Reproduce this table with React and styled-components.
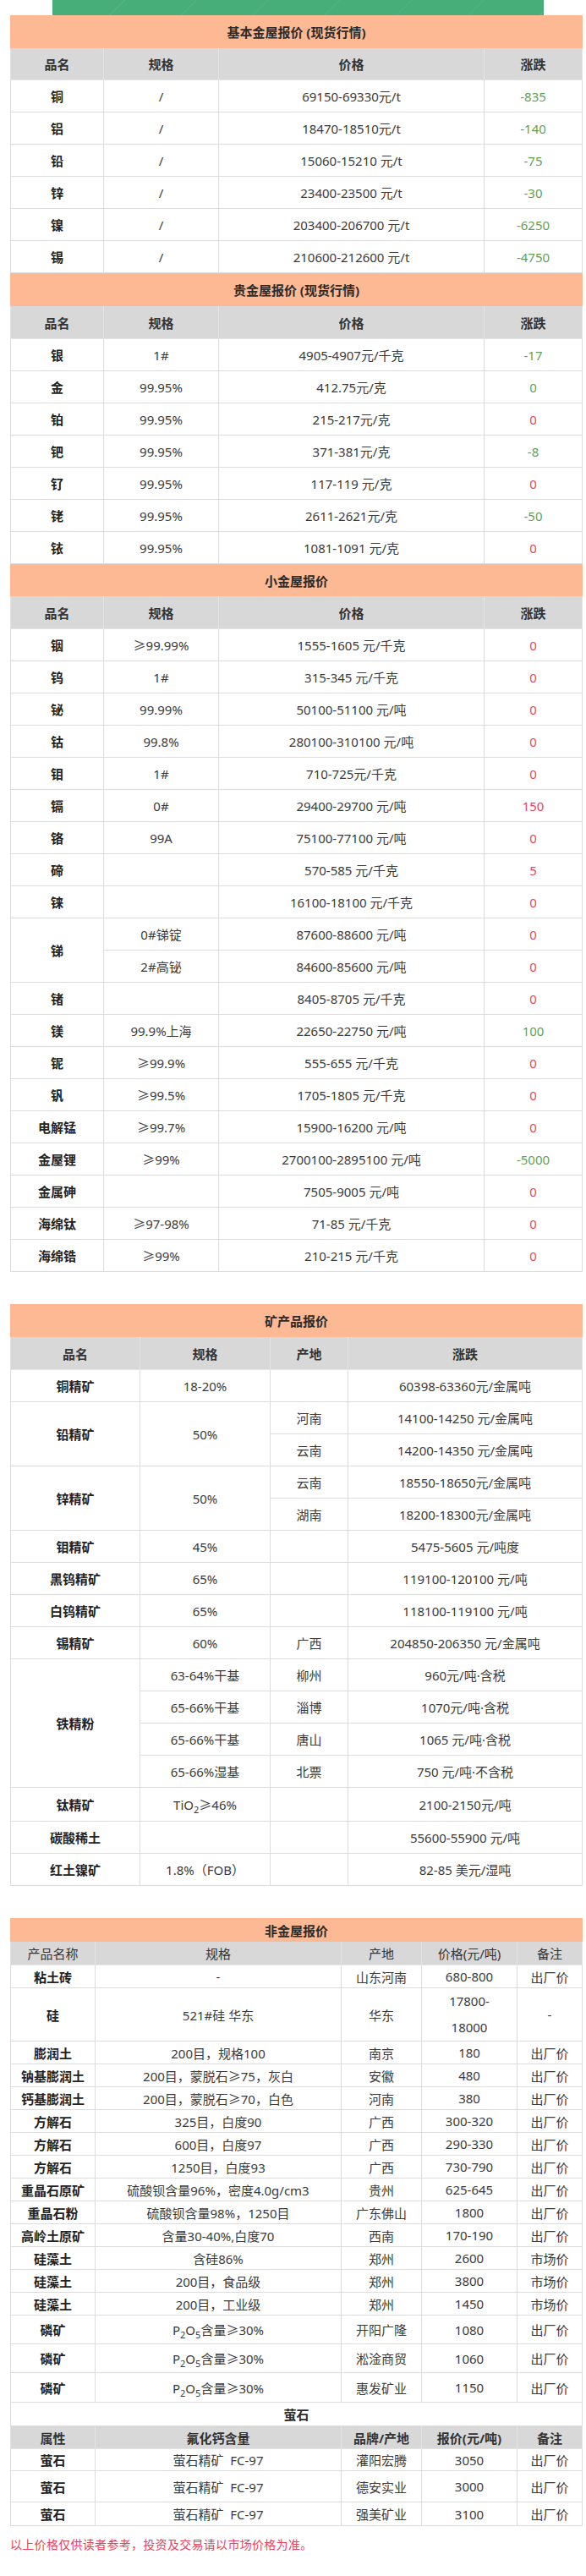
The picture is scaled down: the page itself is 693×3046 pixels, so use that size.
import React from "react";
import styled, { createGlobalStyle } from "styled-components";

const GlobalStyle = createGlobalStyle`
  body {
    margin: 0;
    background: #ffffff;
    font-family: "Noto Sans", "Noto Sans CJK SC", sans-serif;
    color: #333333;
  }
`;

const Page = styled.div`
  width: 693px;
  box-sizing: border-box;
  padding: 0 5px 0 12px;
`;

const Banner = styled.div`
  width: 581px;
  height: 18px;
  margin-left: 50px;
  background-color: #47ae7a;
  background-image: repeating-linear-gradient(
    135deg,
    rgba(255, 255, 255, 0.06) 0 1px,
    transparent 1px 60px
  );
`;

const Section = styled.section`
  margin-top: ${(p) => p.$gap || 0}px;
`;

const Table = styled.table`
  width: 100%;
  border-collapse: collapse;
  table-layout: fixed;
  font-size: 15px;
`;

const Col = styled.col`
  width: ${(p) => p.$w}px;
`;

const Row = styled.tr`
  height: ${(p) => p.$h || 38}px;
`;

const TitleCell = styled.td`
  background: ${(p) => (p.$plain ? "#ffffff" : "#fcb993")};
  border: 1px solid ${(p) => (p.$plain ? "#dddddd" : "#fcb993")};
  text-align: center;
  font-weight: 700;
  color: #2b2b2b;
  padding: 0;
`;

const HeadCell = styled.td`
  background: #d8d8d8;
  border: 1px solid #e4e4e4;
  text-align: center;
  font-weight: ${(p) => (p.$light ? 400 : 700)};
  color: #333333;
  padding: 0;
`;

const Cell = styled.td`
  border: 1px solid #dddddd;
  text-align: center;
  vertical-align: middle;
  padding: 0;
  line-height: ${(p) => p.$lh || "normal"};
  font-weight: ${(p) => (p.$bold ? 700 : 400)};
  color: ${(p) =>
    p.$tone === "down" ? "#5f9f55" : p.$tone === "up" ? "#e6455a" : p.$bold ? "#222222" : "#3a3a3a"};
`;

const Sub = styled.sub`
  font-size: 11px;
  vertical-align: -4px;
  line-height: 0;
`;

const Note = styled.p`
  margin: 9px 0 0;
  font-size: 14px;
  letter-spacing: 0.3px;
  line-height: 24px;
  color: #e8415a;
  font-family: "Noto Sans CJK SC", sans-serif;
`;

const BottomRule = styled.div`
  margin: 32px -5px 0 -12px;
  height: 0;
  border-top: 2px solid #8a8a8a;
`;

const basic = [
  ["铜", "/", "69150-69330元/t", "-835", "down"],
  ["铝", "/", "18470-18510元/t", "-140", "down"],
  ["铅", "/", "15060-15210 元/t", "-75", "down"],
  ["锌", "/", "23400-23500 元/t", "-30", "down"],
  ["镍", "/", "203400-206700 元/t", "-6250", "down"],
  ["锡", "/", "210600-212600 元/t", "-4750", "down"],
];

const precious = [
  ["银", "1#", "4905-4907元/千克", "-17", "down"],
  ["金", "99.95%", "412.75元/克", "0", "down"],
  ["铂", "99.95%", "215-217元/克", "0", "up"],
  ["钯", "99.95%", "371-381元/克", "-8", "down"],
  ["钌", "99.95%", "117-119 元/克", "0", "up"],
  ["铑", "99.95%", "2611-2621元/克", "-50", "down"],
  ["铱", "99.95%", "1081-1091 元/克", "0", "up"],
];

const small = [
  { name: "铟", rows: [["≥99.99%", "1555-1605 元/千克", "0", "up"]] },
  { name: "钨", rows: [["1#", "315-345 元/千克", "0", "up"]] },
  { name: "铋", rows: [["99.99%", "50100-51100 元/吨", "0", "up"]] },
  { name: "钴", rows: [["99.8%", "280100-310100 元/吨", "0", "up"]] },
  { name: "钼", rows: [["1#", "710-725元/千克", "0", "up"]] },
  { name: "镉", rows: [["0#", "29400-29700 元/吨", "150", "up"]] },
  { name: "铬", rows: [["99A", "75100-77100 元/吨", "0", "up"]] },
  { name: "碲", rows: [["", "570-585 元/千克", "5", "up"]] },
  { name: "铼", rows: [["", "16100-18100 元/千克", "0", "up"]] },
  {
    name: "锑",
    rows: [
      ["0#锑锭", "87600-88600 元/吨", "0", "up"],
      ["2#高铋", "84600-85600 元/吨", "0", "up"],
    ],
  },
  { name: "锗", rows: [["", "8405-8705 元/千克", "0", "up"]] },
  { name: "镁", rows: [["99.9%上海", "22650-22750 元/吨", "100", "down"]] },
  { name: "铌", rows: [["≥99.9%", "555-655 元/千克", "0", "up"]] },
  { name: "钒", rows: [["≥99.5%", "1705-1805 元/千克", "0", "up"]] },
  { name: "电解锰", rows: [["≥99.7%", "15900-16200 元/吨", "0", "up"]] },
  { name: "金屋锂", rows: [["≥99%", "2700100-2895100 元/吨", "-5000", "down"]] },
  { name: "金属砷", rows: [["", "7505-9005 元/吨", "0", "up"]] },
  { name: "海绵钛", rows: [["≥97-98%", "71-85 元/千克", "0", "up"]] },
  { name: "海绵锆", rows: [["≥99%", "210-215 元/千克", "0", "up"]] },
];

const titanium = (
  <>
    TiO<Sub>2</Sub>≥46%
  </>
);

const mining = [
  { name: "铜精矿", spec: "18-20%", rows: [["", "60398-63360元/金属吨"]] },
  {
    name: "铅精矿",
    spec: "50%",
    rows: [
      ["河南", "14100-14250 元/金属吨"],
      ["云南", "14200-14350 元/金属吨"],
    ],
  },
  {
    name: "锌精矿",
    spec: "50%",
    rows: [
      ["云南", "18550-18650元/金属吨"],
      ["湖南", "18200-18300元/金属吨"],
    ],
  },
  { name: "钼精矿", spec: "45%", rows: [["", "5475-5605 元/吨度"]] },
  { name: "黑钨精矿", spec: "65%", rows: [["", "119100-120100 元/吨"]] },
  { name: "白钨精矿", spec: "65%", rows: [["", "118100-119100 元/吨"]] },
  { name: "锡精矿", spec: "60%", rows: [["广西", "204850-206350 元/金属吨"]] },
  {
    name: "铁精粉",
    rows: [
      ["柳州", "960元/吨·含税", "63-64%干基"],
      ["淄博", "1070元/吨·含税", "65-66%干基"],
      ["唐山", "1065 元/吨·含税", "65-66%干基"],
      ["北票", "750 元/吨·不含税", "65-66%湿基"],
    ],
  },
  { name: "钛精矿", spec: titanium, h: 40, rows: [["", "2100-2150元/吨"]] },
  { name: "碳酸稀土", spec: "", rows: [["", "55600-55900 元/吨"]] },
  { name: "红土镍矿", spec: "1.8%（FOB）", rows: [["", "82-85 美元/湿吨"]] },
];

const p2o5 = (
  <>
    P<Sub>2</Sub>O<Sub>5</Sub>含量≥30%
  </>
);

const nonMetal = [
  ["粘土砖", "-", "山东河南", "680-800", "出厂价", 27],
  ["硅", "521#硅 华东", "华东", "17800-18000", "-", 62],
  ["膨润土", "200目，规格100", "南京", "180", "出厂价", 27],
  ["钠基膨润土", "200目，蒙脱石≥75，灰白", "安徽", "480", "出厂价", 27],
  ["钙基膨润土", "200目，蒙脱石≥70，白色", "河南", "380", "出厂价", 27],
  ["方解石", "325目，白度90", "广西", "300-320", "出厂价", 27],
  ["方解石", "600目，白度97", "广西", "290-330", "出厂价", 27],
  ["方解石", "1250目，白度93", "广西", "730-790", "出厂价", 27],
  ["重晶石原矿", "硫酸钡含量96%，密度4.0g/cm3", "贵州", "625-645", "出厂价", 27],
  ["重晶石粉", "硫酸钡含量98%，1250目", "广东佛山", "1800", "出厂价", 27],
  ["高岭土原矿", "含量30-40%,白度70", "西南", "170-190", "出厂价", 27],
  ["硅藻土", "含硅86%", "郑州", "2600", "市场价", 27],
  ["硅藻土", "200目，食品级", "郑州", "3800", "市场价", 27],
  ["硅藻土", "200目，工业级", "郑州", "1450", "市场价", 27],
  ["磷矿", p2o5, "开阳广隆", "1080", "出厂价", 34],
  ["磷矿", p2o5, "淞淦商贸", "1060", "出厂价", 34],
  ["磷矿", p2o5, "惠发矿业", "1150", "出厂价", 35],
];

const fluorite = [
  ["灌阳宏腾", "3050", 26],
  ["德安实业", "3000", 37],
  ["强美矿业", "3100", 28],
];

const MetalTable = ({ title, rows, titleH, headH }) => (
  <Table>
    <colgroup>
      <Col $w={110} />
      <Col $w={136} />
      <Col $w={314} />
      <Col $w={116} />
    </colgroup>
    <tbody>
      <Row $h={titleH}>
        <TitleCell colSpan={4}>{title}</TitleCell>
      </Row>
      <Row $h={headH}>
        <HeadCell>品名</HeadCell>
        <HeadCell>规格</HeadCell>
        <HeadCell>价格</HeadCell>
        <HeadCell>涨跌</HeadCell>
      </Row>
      {rows.map(([name, spec, price, change, tone]) => (
        <Row key={name}>
          <Cell $bold>{name}</Cell>
          <Cell>{spec}</Cell>
          <Cell>{price}</Cell>
          <Cell $tone={tone}>{change}</Cell>
        </Row>
      ))}
    </tbody>
  </Table>
);

const SmallMetalTable = () => (
  <Table>
    <colgroup>
      <Col $w={110} />
      <Col $w={136} />
      <Col $w={314} />
      <Col $w={116} />
    </colgroup>
    <tbody>
      <Row $h={37}>
        <TitleCell colSpan={4}>小金屋报价</TitleCell>
      </Row>
      <Row $h={39}>
        <HeadCell>品名</HeadCell>
        <HeadCell>规格</HeadCell>
        <HeadCell>价格</HeadCell>
        <HeadCell>涨跌</HeadCell>
      </Row>
      {small.map((group) =>
        group.rows.map(([spec, price, change, tone], i) => (
          <Row key={group.name + i}>
            {i === 0 && (
              <Cell $bold rowSpan={group.rows.length}>
                {group.name}
              </Cell>
            )}
            <Cell>{spec}</Cell>
            <Cell>{price}</Cell>
            <Cell $tone={tone}>{change}</Cell>
          </Row>
        ))
      )}
    </tbody>
  </Table>
);

const MiningTable = () => (
  <Table>
    <colgroup>
      <Col $w={153} />
      <Col $w={154} />
      <Col $w={92} />
      <Col $w={277} />
    </colgroup>
    <tbody>
      <Row $h={38}>
        <TitleCell colSpan={4}>矿产品报价</TitleCell>
      </Row>
      <Row $h={39}>
        <HeadCell>品名</HeadCell>
        <HeadCell>规格</HeadCell>
        <HeadCell>产地</HeadCell>
        <HeadCell>涨跌</HeadCell>
      </Row>
      {mining.map((group) =>
        group.rows.map(([place, price, ownSpec], i) => (
          <Row key={group.name + i} $h={group.h}>
            {i === 0 && (
              <Cell $bold rowSpan={group.rows.length}>
                {group.name}
              </Cell>
            )}
            {ownSpec !== undefined ? (
              <Cell>{ownSpec}</Cell>
            ) : (
              i === 0 && <Cell rowSpan={group.rows.length}>{group.spec}</Cell>
            )}
            <Cell>{place}</Cell>
            <Cell>{price}</Cell>
          </Row>
        ))
      )}
    </tbody>
  </Table>
);

const NonMetalTable = () => (
  <Table>
    <colgroup>
      <Col $w={100} />
      <Col $w={291} />
      <Col $w={95} />
      <Col $w={113} />
      <Col $w={77} />
    </colgroup>
    <tbody>
      <Row $h={27}>
        <TitleCell colSpan={5}>非金屋报价</TitleCell>
      </Row>
      <Row $h={28}>
        <HeadCell $light>产品名称</HeadCell>
        <HeadCell $light>规格</HeadCell>
        <HeadCell $light>产地</HeadCell>
        <HeadCell $light>价格(元/吨)</HeadCell>
        <HeadCell $light>备注</HeadCell>
      </Row>
      {nonMetal.map(([name, spec, place, price, note, h], i) => (
        <Row key={i} $h={h}>
          <Cell $bold>{name}</Cell>
          <Cell>{spec}</Cell>
          <Cell>{place}</Cell>
          <Cell $lh={h > 40 ? "31px" : undefined}>
            {h > 40 ? (
              <>
                17800-
                <br />
                18000
              </>
            ) : (
              price
            )}
          </Cell>
          <Cell>{note}</Cell>
        </Row>
      ))}
      <Row $h={28}>
        <TitleCell $plain colSpan={5}>
          萤石
        </TitleCell>
      </Row>
      <Row $h={27}>
        <HeadCell>属性</HeadCell>
        <HeadCell>氟化钙含量</HeadCell>
        <HeadCell>品牌/产地</HeadCell>
        <HeadCell>报价(元/吨)</HeadCell>
        <HeadCell>备注</HeadCell>
      </Row>
      {fluorite.map(([place, price, h]) => (
        <Row key={place} $h={h}>
          <Cell $bold>萤石</Cell>
          <Cell>萤石精矿&nbsp;&nbsp;FC-97</Cell>
          <Cell>{place}</Cell>
          <Cell>{price}</Cell>
          <Cell>出厂价</Cell>
        </Row>
      ))}
    </tbody>
  </Table>
);

const App = () => {
  return (
    <>
      <GlobalStyle />
      <Page>
        <Banner />
        <MetalTable
          title="基本金屋报价 (现货行情)"
          rows={basic}
          titleH={38}
          headH={38}
        />
        <MetalTable
          title="贵金屋报价 (现货行情)"
          rows={precious}
          titleH={38}
          headH={39}
        />
        <SmallMetalTable />
        <Section $gap={38}>
          <MiningTable />
        </Section>
        <Section $gap={38}>
          <NonMetalTable />
        </Section>
        <Note>以上价格仅供读者参考，投资及交易请以市场价格为准。</Note>
        <BottomRule />
      </Page>
    </>
  );
};

export default App;
